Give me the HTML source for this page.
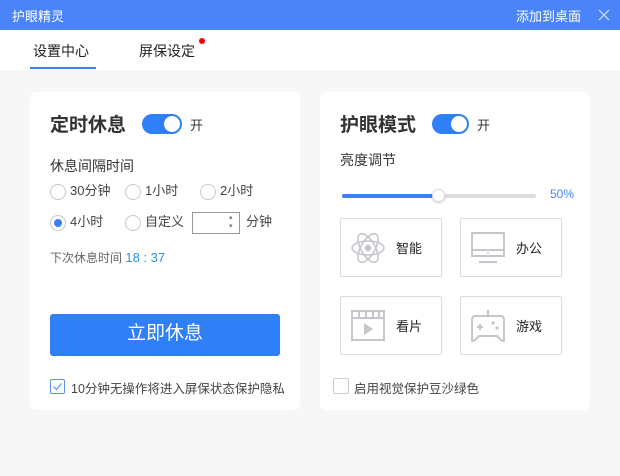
<!DOCTYPE html>
<html><head><meta charset="utf-8"><style>
*{margin:0;padding:0;box-sizing:border-box}
body{width:620px;height:476px;background:#f7f7f7;font-family:"Liberation Sans","Noto Sans CJK SC",sans-serif;color:#333;position:relative;overflow:hidden}
.a{position:absolute;white-space:nowrap}
.card{position:absolute;background:#fff;border-radius:7px;top:92px;width:270px;height:318px}
.tg{position:absolute;width:40px;height:20px;border-radius:10px;background:#2e7ff8}
.tg:after{content:"";position:absolute;right:2px;top:2px;width:16px;height:16px;border-radius:50%;background:#fff}
.r{position:absolute;width:16px;height:16px;border:1px solid #c8c8c8;border-radius:50%;background:#fff}
.rl{font-size:13px;color:#444;line-height:16px}
.box{position:absolute;width:102px;height:59px;border:1px solid #dcdcdc;border-radius:2px;background:#fff}
.box span{position:absolute;left:55px;top:19px;font-size:13px;color:#222}
.box svg{position:absolute;left:10px;top:9px}
</style></head><body>
<div class="a" style="left:0;top:0;width:620px;height:30px;background:#4a84f8"></div>
<div class="a" style="left:12px;top:6px;font-size:13px;color:#fff">护眼精灵</div>
<div class="a" style="left:516px;top:6px;font-size:13px;color:#fff">添加到桌面</div>
<svg class="a" style="left:598px;top:9px" width="12" height="12"><path d="M1 1L11 11M11 1L1 11" stroke="#d8e4fc" stroke-width="1.2"/></svg>
<div class="a" style="left:0;top:30px;width:620px;height:40px;background:#fff"></div>
<div class="a" style="left:33px;top:41px;font-size:14px;color:#222">设置中心</div>
<div class="a" style="left:30px;top:67px;width:66px;height:2px;background:#3b7ff5"></div>
<div class="a" style="left:139px;top:41px;font-size:14px;color:#222">屏保设定</div>
<div class="a" style="left:199px;top:38px;width:6px;height:6px;border-radius:50%;background:#f00"></div>

<div class="card" style="left:30px"></div>
<div class="a" style="left:50px;top:110px;font-size:19px;font-weight:bold;color:#333">定时休息</div>
<div class="tg" style="left:142px;top:114px"></div>
<div class="a" style="left:190px;top:115px;font-size:13px">开</div>
<div class="a" style="left:50px;top:156px;font-size:14px;color:#333">休息间隔时间</div>
<div class="r" style="left:50px;top:184px"></div><div class="a rl" style="left:70px;top:183px">30分钟</div>
<div class="r" style="left:125px;top:184px"></div><div class="a rl" style="left:145px;top:183px">1小时</div>
<div class="r" style="left:200px;top:184px"></div><div class="a rl" style="left:220px;top:183px">2小时</div>
<div class="r" style="left:50px;top:215px"><div style="position:absolute;left:3px;top:3px;width:8px;height:8px;border-radius:50%;background:#3b7ff5"></div></div><div class="a rl" style="left:70px;top:214px">4小时</div>
<div class="r" style="left:125px;top:215px"></div><div class="a rl" style="left:145px;top:214px">自定义</div>
<div class="a" style="left:192px;top:212px;width:48px;height:22px;border:1px solid #999"></div>
<div class="a" style="left:229px;top:213px;font-size:7px;color:#777;line-height:9px">▴<br>▾</div>
<div class="a rl" style="left:246px;top:214px">分钟</div>
<div class="a" style="left:50px;top:249px;font-size:12px;color:#666">下次休息时间 <span style="color:#2e8ff0;font-size:13px">18 : 37</span></div>
<div class="a" style="left:50px;top:314px;width:230px;height:42px;background:#2e7ff8;border-radius:3px;color:#fff;font-size:19px;text-align:center;line-height:40px">立即休息</div>
<div class="a" style="left:50px;top:379px;width:15px;height:15px;border:1px solid #5c8ef5;border-radius:2px"></div>
<svg class="a" style="left:52px;top:381px" width="11" height="11"><path d="M1.5 5.5L4.5 8.5L9.5 2.5" stroke="#5c8ef5" stroke-width="1.2" fill="none"/></svg>
<div class="a" style="left:71px;top:378px;font-size:12.5px;color:#444">10分钟无操作将进入屏保状态保护隐私</div>

<div class="card" style="left:320px"></div>
<div class="a" style="left:340px;top:110px;font-size:19px;font-weight:bold;color:#333">护眼模式</div>
<div class="tg" style="left:432px;top:114px;width:37px"></div>
<div class="a" style="left:477px;top:115px;font-size:13px">开</div>
<div class="a" style="left:340px;top:150px;font-size:14px;color:#333">亮度调节</div>
<div class="a" style="left:342px;top:194px;width:194px;height:4px;background:#ddd;border-radius:2px"></div>
<div class="a" style="left:342px;top:194px;width:96px;height:4px;background:#3b7ff5;border-radius:2px"></div>
<div class="a" style="left:432px;top:189px;width:13px;height:13px;border-radius:50%;background:#fff;border:1px solid #ddd;box-shadow:0 1px 2px rgba(0,0,0,.2)"></div>
<div class="a" style="left:550px;top:187px;font-size:12px;color:#4a84f8">50%</div>
<div class="box" style="left:340px;top:218px"><svg width="36" height="40" viewBox="0 0 36 40"><g fill="none" stroke="#c4c6cc" stroke-width="1.6"><ellipse cx="17" cy="20" rx="16" ry="7"/><ellipse cx="17" cy="20" rx="16" ry="7" transform="rotate(60 17 20)"/><ellipse cx="17" cy="20" rx="16" ry="7" transform="rotate(-60 17 20)"/></g><path d="M17 16L21 20L17 24L13 20Z" fill="#c4c6cc"/></svg><span>智能</span></div>
<div class="box" style="left:460px;top:218px"><svg width="36" height="40" viewBox="0 0 36 40"><g fill="none" stroke="#c4c6cc" stroke-width="2"><rect x="1" y="5" width="32" height="23"/><path d="M1 22H33M8 34H26"/></g><circle cx="17" cy="25" r="1" fill="#c4c6cc"/></svg><span>办公</span></div>
<div class="box" style="left:340px;top:296px"><svg width="36" height="40" viewBox="0 0 36 40"><g fill="none" stroke="#c4c6cc" stroke-width="2"><rect x="1" y="5" width="32" height="29"/><path d="M1 12H33M8 5V12M15 5V12M22 5V12M28 5V12"/></g><path d="M13 17L22 23L13 29Z" fill="#c4c6cc"/></svg><span>看片</span></div>
<div class="box" style="left:460px;top:296px"><svg width="36" height="40" viewBox="0 0 36 40"><g fill="none" stroke="#c4c6cc" stroke-width="2"><path d="M17 4V10M4 10H30Q33 10 33 14V34Q33 36 30 34L26 30H8L4 34Q1 36 1 34V14Q1 10 4 10Z"/><path d="M6 21H12M9 18V24"/></g><circle cx="22" cy="17" r="1.6" fill="#c4c6cc"/><circle cx="26" cy="22" r="1.6" fill="#c4c6cc"/></svg><span>游戏</span></div>
<div class="a" style="left:333px;top:378px;width:16px;height:16px;border:1px solid #ccc;border-radius:2px"></div>
<div class="a" style="left:354px;top:378px;font-size:12.5px;color:#444">启用视觉保护豆沙绿色</div>
</body></html>
